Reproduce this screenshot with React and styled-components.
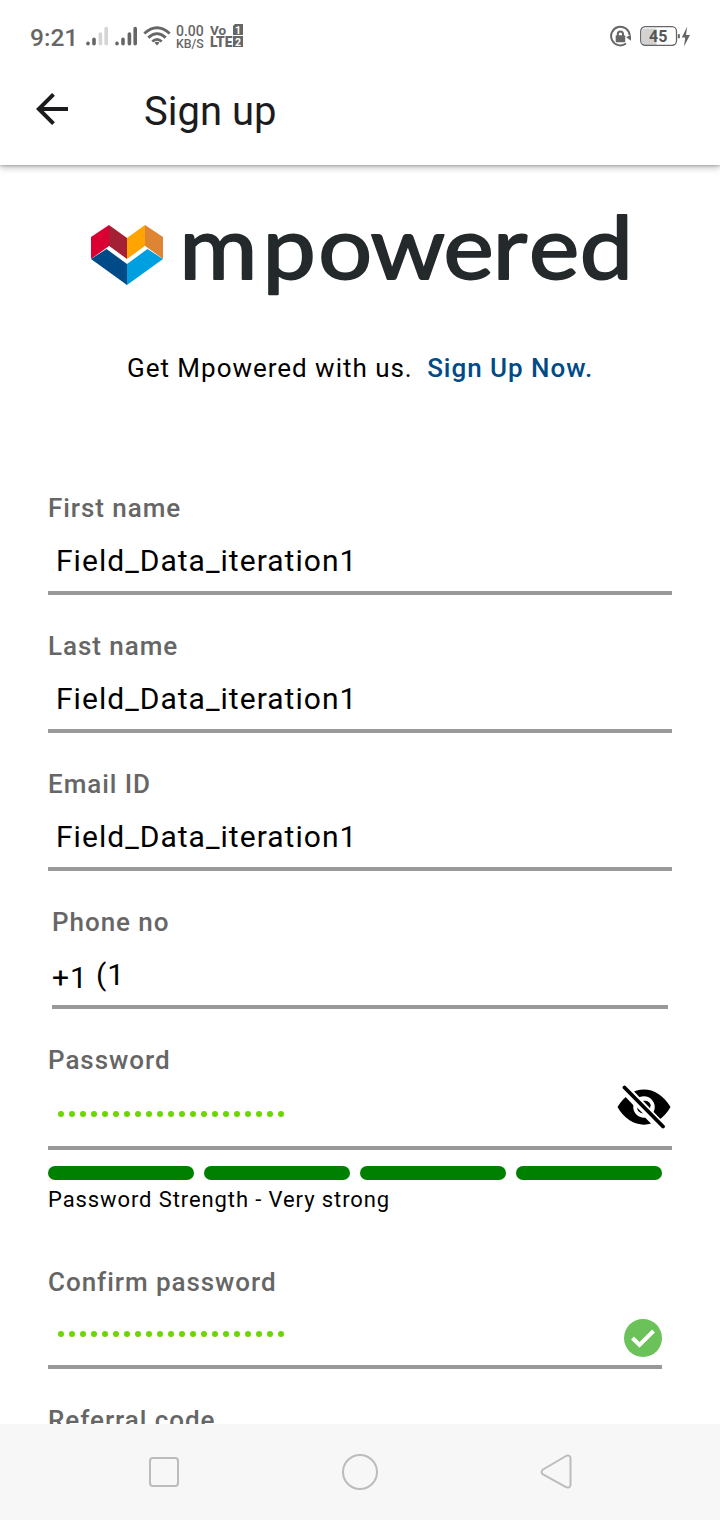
import React from "react";
import styled, { createGlobalStyle } from "styled-components";

const GlobalStyle = createGlobalStyle`
  * { box-sizing: border-box; }
  body { margin: 0; background: #fff; font-family: Roboto, "Liberation Sans", sans-serif; color: #000; }
  svg { display: block; flex: none; }
`;

const Screen = styled.div`
  width: 720px;
  height: 1520px;
  display: flex;
  flex-direction: column;
  overflow: hidden;
  background: #fff;
`;

const StatusBar = styled.div`
  height: 72px;
  flex: none;
  display: flex;
  align-items: center;
  justify-content: space-between;
  padding: 0 28px 0 30px;
  color: #666;
  background: #fff;
  position: relative;
  z-index: 1;
`;

const StatusGroup = styled.div`
  display: flex;
  align-items: center;
`;

const Clock = styled.span`
  font-size: 24.5px;
  line-height: 30px;
  font-weight: 500;
  width: 56px;
  padding-top: 3px;
`;

const NetSpeed = styled.div`
  width: 34px;
  padding-top: 2px;
  font-size: 12.3px;
  line-height: 12px;
  font-weight: 500;
  white-space: nowrap;
`;

const Rate = styled.div`
  font-size: 14px;
  line-height: 13px;
`;

const AppBar = styled.header`
  height: 93px;
  flex: none;
  display: flex;
  align-items: center;
  padding: 0 36px 20px;
  color: #1c1c1e;
  position: relative;
  box-shadow: 0 1px 2px rgba(0, 0, 0, 0.16), 0 2px 7px rgba(0, 0, 0, 0.3);
`;

const Title = styled.h1`
  margin: 7px 0 0 76px;
  font-size: 40px;
  line-height: 48px;
  font-weight: 400;
`;

const Content = styled.main`
  flex: 1;
  min-height: 0;
  overflow: hidden;
  display: flex;
  flex-direction: column;
  padding: 46px 48px 0;
`;

const Brand = styled.div`
  display: flex;
  height: 90px;
  margin-left: 43px;
`;

const Intro = styled.p`
  margin: 52px 0 110px 79px;
  font-size: 26px;
  line-height: 30px;
  letter-spacing: 0.98px;
  white-space: pre;
`;

const SignUpLink = styled.a`
  margin-left: 7px;
  color: #004b87;
  font-weight: 500;
`;

const Field = styled.div`
  flex: none;
  margin: 0 ${(p) => p.$inset || 0}px ${(p) => p.$gap ?? 36}px;
  margin-right: ${(p) => p.$right ?? p.$inset ?? 0}px;
`;

const Label = styled.div`
  color: #666;
  font-size: 26px;
  line-height: 30px;
  font-weight: 500;
  letter-spacing: 0.95px;
`;

const InputLine = styled.div`
  height: ${(p) => p.$height || 72}px;
  display: flex;
  align-items: flex-start;
  padding: ${(p) => p.$pad || "20px 0 0 8px"};
  border-bottom: 4px solid #999;
  font-size: 30px;
  line-height: 36px;
  letter-spacing: 1.03px;
`;

const Prefix = styled.span`
  width: 44px;
  margin-top: 3px;
`;

const PasswordDots = styled.div`
  display: flex;
  gap: 4.5px;
  flex: 1;
  padding-top: ${(p) => p.$top}px;
`;

const Dot = styled.i`
  width: 6.5px;
  height: 6.5px;
  border-radius: 50%;
  background: #6bd600;
`;

const StrengthMeter = styled.div`
  display: flex;
  flex: none;
  gap: 10px;
`;

const StrengthBar = styled.div`
  width: 146px;
  height: 14px;
  border-radius: 7px;
  background: #008000;
`;

const StrengthText = styled.div`
  flex: none;
  margin: 6px 0 54px;
  font-size: 22px;
  line-height: 27px;
  letter-spacing: 0.9px;
`;

const NavBar = styled.nav`
  height: 96px;
  flex: none;
  display: flex;
  align-items: center;
  justify-content: space-between;
  padding: 0 144px;
  background: #f7f7f7;
`;

const Signal = ({ weak }) => (
  <svg width="24" height="20" viewBox="0 0 24 20" fill="none" strokeWidth="3.6" strokeLinecap="round">
    <path stroke="#666" d="M2 17.2v.6M8 13.2v4.6" />
    <path stroke={weak ? "#d5d5d5" : "#666"} d="M14.4 8v9.8M20.2 2.500v15.300" />
  </svg>
);

const Wifi = () => (
  <svg width="28" height="20" viewBox="0 0 28 20" fill="none" stroke="#666" strokeWidth="2.8">
    <path d="M1.3 7.5Q14-4 26.7 7.5M5.3 11.6Q14 3.7 22.7 11.6M9.3 15.5Q14 11.2 18.7 15.5" />
    <path d="m11.5 16.7q2.5-2 5 0L14 19.4z" fill="#666" stroke="none" />
  </svg>
);

const Volte = () => (
  <svg width="34" height="25" viewBox="0 0 34 25" fill="#666" fontFamily="Roboto, sans-serif" fontWeight="700">
    <text x="0" y="10.5" fontSize="13.5">Vo</text>
    <text x="0" y="23" fontSize="14" fontWeight="900" textLength="22.5" lengthAdjust="spacingAndGlyphs">LTE</text>
    <path d="M25 0h8v11h-10V2zM23 12h10v11h-10z" />
    <text x="25" y="9.5" fontSize="10.5" fill="#fff">1</text>
    <text x="25" y="21.5" fontSize="10.5" fill="#fff">2</text>
  </svg>
);

const RotationLock = () => (
  <svg width="22" height="22" viewBox="0 0 22 22" fill="none" stroke="#666" strokeWidth="2">
    <path d="M16 18.500A9.300 9.300 0 1 1 19.700 10.500" />
    <path d="m16 12 5-1.800v5.600z" fill="#666" stroke="none" />
    <rect x="5.700" y="10.300" width="9.500" height="7" rx="1" fill="#666" stroke="none" />
    <path d="M7.800 11V9a2.600 2.600 0 0 1 5.200 0v2" />
  </svg>
);

const Battery = () => (
  <svg width="52" height="22" viewBox="0 0 52 22">
    <path d="M5 3.500h11.500v16.500H5a3 3 0 0 1-3-3V6.500a3 3 0 0 1 3-3z" fill="#d2d2d2" />
    <rect x=".7" y="1.700" width="35.800" height="18.600" rx="4.500" fill="none" stroke="#666" strokeWidth="1.300" />
    <path d="M38.300 9.500h1v3.500h-1z" fill="#666" stroke="#666" />
    <path d="M47.200 1.500 41.800 12.500h3.400l-1.200 9 6-11.500h-4z" fill="#666" />
    <text x="9" y="17" fontFamily="Roboto, sans-serif" fontWeight="700" fontSize="16" fill="#555">45</text>
  </svg>
);

const BackArrow = () => (
  <svg width="32" height="32" viewBox="0 0 32 32" fill="none" stroke="#1c1c1e" strokeWidth="4">
    <path d="M32 16H3M17.5 1.4 2.8 16l14.7 14.6" />
  </svg>
);

const Logo = () => (
  <svg width="545" height="90" viewBox="0 0 545 90" overflow="visible">
    <path d="M0 26 18 14V38L0 48z" fill="#db0032" />
    <path d="M18 14 36 27V48L18 35z" fill="#a32035" />
    <path d="M36 27 54 14V35L36 48z" fill="#ffa400" />
    <path d="M54 14 72 26V48L54 35z" fill="#de8435" />
    <path d="M0 48 18 35 36 48.5 54 35 72 48 36 74z" fill="#fff" />
    <path d="M0 48 15.5 38 36 53V74z" fill="#004b87" />
    <path d="M72 48 56.5 38 36 53V74z" fill="#009fdf" />
    <text
      transform="scale(1.08 1)"
      x="81.800 158.800 210.400 258.700 326.300 371.900 405.600 452.600"
      y="67.500"
      fontFamily="Lato, sans-serif"
      fontSize="88"
      fill="#24292b"
      stroke="#24292b"
      strokeWidth="1.900"
      strokeLinejoin="round"
    >
      mpowered
    </text>
  </svg>
);

const HiddenEye = () => (
  <svg width="54" height="44" viewBox="0 0 54 44">
    <path d="M.5 22C14-1.500 40-1.500 53.500 22C40 45.500 14 45.500 .5 22z" fill="#000" />
    <path d="M3-1 46 44" stroke="#fff" strokeWidth="10" />
    <circle cx="27" cy="22" r="8.500" fill="none" stroke="#fff" strokeWidth="4.500" />
    <path d="M28 15.500q5.500 1 6 6zM26 28.500q-5.500-1-6-6z" fill="#000" />
    <path d="M7.500 2.500 46 41.500" stroke="#000" strokeWidth="3.800" strokeLinecap="round" />
  </svg>
);

const Check = () => (
  <svg width="38" height="38" viewBox="0 0 38 38">
    <circle cx="19" cy="19" r="19" fill="#6bc259" />
    <path d="m8.500 19 7 7L29.500 12" fill="none" stroke="#fff" strokeWidth="4" />
  </svg>
);

const EyeSlot = styled.span`
  margin: 10px 1px 0 0;
`;

const CheckSlot = styled.span`
  margin-top: 22px;
`;

const Spacer = styled.span`
  width: ${(p) => p.$w}px;
`;

const dots = Array.from({ length: 21 }, (_, i) => <Dot key={i} />);

const textFields = ["First name", "Last name", "Email ID"];

export default function App() {
  return (
    <Screen>
      <GlobalStyle />
      <StatusBar>
        <StatusGroup>
          <Clock>9:21</Clock>
          <Signal weak />
          <Spacer $w={5} />
          <Signal />
          <Spacer $w={4} />
          <Wifi />
          <Spacer $w={5} />
          <NetSpeed>
            <Rate>0.00</Rate>
            KB/S
          </NetSpeed>
          <Volte />
        </StatusGroup>
        <StatusGroup>
          <RotationLock />
          <Spacer $w={8} />
          <Battery />
        </StatusGroup>
      </StatusBar>
      <AppBar>
        <BackArrow />
        <Title>Sign up</Title>
      </AppBar>
      <Content>
        <Brand><Logo /></Brand>
        <Intro>Get Mpowered with us. <SignUpLink>Sign Up Now.</SignUpLink></Intro>
        {textFields.map((name) => (
          <Field key={name}>
            <Label>{name}</Label>
            <InputLine>Field_Data_iteration1</InputLine>
          </Field>
        ))}
        <Field $inset={4}>
          <Label>Phone no</Label>
          <InputLine $pad="20px 0 0">
            <Prefix>+1</Prefix>
            <span>(1</span>
          </InputLine>
        </Field>
        <Field $gap={16}>
          <Label>Password</Label>
          <InputLine $height={75} $pad="0 0 0 9.5px">
            <PasswordDots $top={35.5}>{dots}</PasswordDots>
            <EyeSlot><HiddenEye /></EyeSlot>
          </InputLine>
        </Field>
        <StrengthMeter>
          {[0, 1, 2, 3].map((n) => <StrengthBar key={n} />)}
        </StrengthMeter>
        <StrengthText>Password Strength - Very strong</StrengthText>
        <Field $right={10}>
          <Label>Confirm password</Label>
          <InputLine $pad="0 0 0 9.5px">
            <PasswordDots $top={33.5}>{dots}</PasswordDots>
            <CheckSlot><Check /></CheckSlot>
          </InputLine>
        </Field>
        <Field>
          <Label>Referral code</Label>
        </Field>
      </Content>
      <NavBar>
        <svg width="40" height="40" viewBox="0 0 40 40" fill="none" stroke="#bcbcbc" strokeWidth="2">
          <rect x="6" y="6" width="28" height="28" rx="3" />
        </svg>
        <svg width="40" height="40" viewBox="0 0 40 40" fill="none" stroke="#bcbcbc" strokeWidth="2">
          <circle cx="20" cy="20" r="17" />
        </svg>
        <svg width="40" height="40" viewBox="0 0 40 40" fill="none" stroke="#bcbcbc" strokeWidth="2">
          <path d="M34.500 6v27a2.800 2.800 0 0 1-4.500 2L7 22.500a3 3 0 0 1 0-5L30 4a2.800 2.800 0 0 1 4.500 2z" />
        </svg>
      </NavBar>
    </Screen>
  );
}
